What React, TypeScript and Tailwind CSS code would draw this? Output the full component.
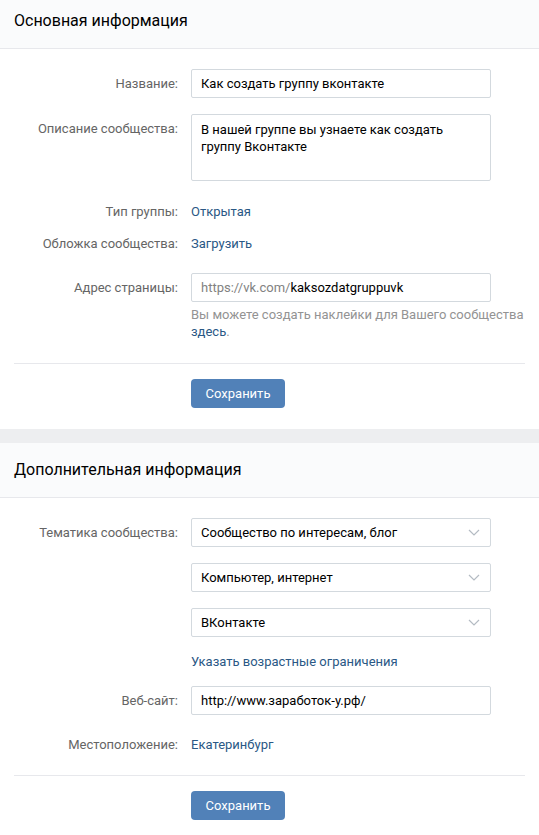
import React from "react";

const font = { fontFamily: "Roboto, 'Open Sans', sans-serif" };

function Label({ children }: { children?: React.ReactNode }) {
  return (
    <div className="w-[164px] shrink-0 text-right text-[13px] leading-[29px] text-[#656565]">
      {children}
    </div>
  );
}

function Row({ label, children, className = "" }: { label?: string; children: React.ReactNode; className?: string }) {
  return (
    <div className={`flex gap-[13px] ${className}`}>
      <Label>{label}</Label>
      <div className="w-[300px]">{children}</div>
    </div>
  );
}

function Input({ children }: { children: React.ReactNode }) {
  return (
    <div className="h-[29px] border border-[#d3d9de] rounded-[2px] bg-white px-[9px] text-[13px] leading-[27px] text-black">
      {children}
    </div>
  );
}

function Select({ value }: { value: string }) {
  return (
    <div className="h-[29px] border border-[#d3d9de] rounded-[2px] bg-white pl-[9px] pr-[10px] flex items-center justify-between text-[13px] text-black">
      <span>{value}</span>
      <svg width="12" height="7" viewBox="0 0 12 7" fill="none">
        <path d="M1 1l5 5 5-5" stroke="#b4bbc3" strokeWidth="1.2" />
      </svg>
    </div>
  );
}

function Header({ title }: { title: string }) {
  return (
    <div className="h-[55px] bg-[#fafbfc] border-b border-[#e7e8ec] px-[14px] flex items-center text-[16px] text-black">
      {title}
    </div>
  );
}

function Save({ className = "" }: { className?: string }) {
  return (
    <div className={`border-t border-[#e7e8ec] pt-[15px] flex gap-[13px] ${className}`}>
      <div className="w-[164px]" />
      <button className="w-[94px] h-[29px] rounded-[4px] bg-[#5181b8] text-white text-[13px]">Сохранить</button>
    </div>
  );
}

export default function App() {
  return (
    <div className="w-[539px] min-h-[835px] bg-[#edeef0]" style={font}>
      <div className="bg-white -mt-[6px]">
        <Header title="Основная информация" />
        <div className="px-[14px] pt-[20px] pb-[21px]">
          <Row label="Название:">
            <Input>Как создать группу вконтакте</Input>
          </Row>
          <Row label="Описание сообщества:" className="mt-[16px]">
            <div className="h-[67px] border border-[#d3d9de] rounded-[2px] px-[9px] pt-[6px] text-[13px] leading-[17px] text-black">
              В нашей группе вы узнаете как создать группу Вконтакте
            </div>
          </Row>
          <div className="flex gap-[13px] mt-[16px] text-[13px] leading-[29px]">
            <div className="w-[164px] text-right text-[#656565]">Тип группы:</div>
            <a className="text-[#2a5885]">Открытая</a>
          </div>
          <div className="flex gap-[13px] mt-[3px] text-[13px] leading-[29px]">
            <div className="w-[164px] text-right text-[#656565]">Обложка сообщества:</div>
            <a className="text-[#2a5885]">Загрузить</a>
          </div>
          <Row label="Адрес страницы:" className="mt-[15px]">
            <Input>
              <span className="text-[#828282]">https://vk.com/</span>kaksozdatgruppuvk
            </Input>
            <div className="mt-[4px] w-[334px] text-[13px] leading-[17px] text-[#939393]">
              Вы можете создать наклейки для Вашего сообщества <a className="text-[#2a5885]">здесь</a>.
            </div>
          </Row>
          <Save className="mt-[23px]" />
        </div>
      </div>
      <div className="h-[14px]" />
      <div className="bg-white">
        <Header title="Дополнительная информация" />
        <div className="px-[14px] pt-[20px] pb-[20px]">
          <Row label="Тематика сообщества:">
            <Select value="Сообщество по интересам, блог" />
          </Row>
          <Row className="mt-[16px]">
            <Select value="Компьютер, интернет" />
          </Row>
          <Row className="mt-[16px]">
            <Select value="ВКонтакте" />
          </Row>
          <div className="flex gap-[13px] mt-[10px] text-[13px] leading-[29px]">
            <div className="w-[164px]" />
            <a className="text-[#2a5885]">Указать возрастные ограничения</a>
          </div>
          <Row label="Веб-сайт:" className="mt-[10px]">
            <Input>http://www.заработок-у.рф/</Input>
          </Row>
          <div className="flex gap-[13px] mt-[15px] text-[13px] leading-[29px]">
            <div className="w-[164px] text-right text-[#656565]">Местоположение:</div>
            <a className="text-[#2a5885]">Екатеринбург</a>
          </div>
          <Save className="mt-[16px]" />
        </div>
      </div>
    </div>
  );
}
